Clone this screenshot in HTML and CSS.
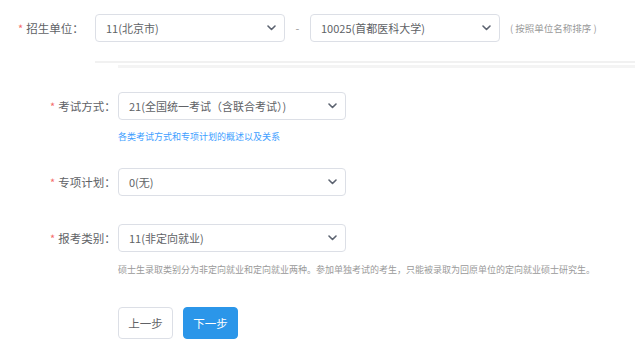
FILE: index.html
```html
<!DOCTYPE html>
<html lang="zh-CN">
<head>
    <meta charset="UTF-8">
    <meta name="viewport" content="width=device-width, initial-scale=1.0">
    <title>报考信息</title>
    <link rel="stylesheet" href="styles.css">
</head>
<body>

    <!-- 招生单位 -->
    <div class="unit-row">
        <label class="unit-label"><span class="req">*</span>招生单位：</label>
        <div class="select unit-select">
            <span>11(北京市)</span>
            <svg class="arrow" width="9" height="6" viewBox="0 0 9 6"><polyline points="1,1 4.5,4.5 8,1" /></svg>
        </div>
        <span class="dash">-</span>
        <div class="select unit-select">
            <span>10025(首都医科大学)</span>
            <svg class="arrow" width="9" height="6" viewBox="0 0 9 6"><polyline points="1,1 4.5,4.5 8,1" /></svg>
        </div>
        <span class="unit-hint">( 按照单位名称排序 )</span>
    </div>

    <div class="divider">
        <div class="line line-a"></div>
        <div class="line line-b"></div>
    </div>

    <!-- 报考信息 -->
    <div class="form">
        <div class="form-item item-exam">
            <label class="form-label"><span class="req">*</span>考试方式：</label>
            <div class="form-field">
                <div class="select">
                    <span>21(全国统一考试（含联合考试）)</span>
                    <svg class="arrow" width="9" height="6" viewBox="0 0 9 6"><polyline points="1,1 4.5,4.5 8,1" /></svg>
                </div>
                <a class="help-link" href="#">各类考试方式和专项计划的概述以及关系</a>
            </div>
        </div>

        <div class="form-item item-plan">
            <label class="form-label"><span class="req">*</span>专项计划：</label>
            <div class="form-field">
                <div class="select">
                    <span>0(无)</span>
                    <svg class="arrow" width="9" height="6" viewBox="0 0 9 6"><polyline points="1,1 4.5,4.5 8,1" /></svg>
                </div>
            </div>
        </div>

        <div class="form-item item-type">
            <label class="form-label"><span class="req">*</span>报考类别：</label>
            <div class="form-field">
                <div class="select">
                    <span>11(非定向就业)</span>
                    <svg class="arrow" width="9" height="6" viewBox="0 0 9 6"><polyline points="1,1 4.5,4.5 8,1" /></svg>
                </div>
                <p class="note">硕士生录取类别分为非定向就业和定向就业两种。参加单独考试的考生，只能被录取为回原单位的定向就业硕士研究生。</p>
            </div>
        </div>

        <div class="actions">
            <button class="btn btn-prev">上一步</button>
            <button class="btn btn-next">下一步</button>
        </div>
    </div>

</body>
</html>
```

FILE: styles.css
```css
* {
    margin: 0;
    padding: 0;
    box-sizing: border-box;
    font-family: "Noto Sans CJK SC", "Liberation Sans", sans-serif;
}

:root {
    --text-regular: #606266;
    --text-muted: #9a9a9a;
    --border-color: #dcdfe6;
    --danger: #f56c6c;
    --primary: #2b96e9;
    --link: #409eff;
}

body {
    background-color: #ffffff;
    color: var(--text-regular);
    width: 635px;
    height: 353px;
    overflow: hidden;
}

.req {
    color: var(--danger);
    margin-right: 3px;
    font-size: 11px;
}

/* Select box */
.select {
    height: 28px;
    border: 1px solid var(--border-color);
    border-radius: 4px;
    display: flex;
    align-items: center;
    justify-content: space-between;
    padding: 0 8px 0 10px;
    font-size: 11px;
    color: var(--text-regular);
    background-color: #fff;
}

.arrow polyline {
    fill: none;
    stroke: #5c6370;
    stroke-width: 1.6;
    stroke-linecap: round;
    stroke-linejoin: round;
}

/* Unit row */
.unit-row {
    display: flex;
    align-items: center;
    padding-top: 14px;
    padding-left: 18px;
}

.unit-label {
    width: 77px;
    font-size: 11.5px;
    line-height: 28px;
}

.unit-select {
    width: 190px;
}

.dash {
    width: 25px;
    text-align: center;
    font-size: 11px;
    color: var(--text-muted);
}

.unit-hint {
    margin-left: 10px;
    font-size: 9.5px;
    color: var(--text-muted);
}

/* Divider lines */
.divider {
    margin-top: 19px;
}

.line {
    height: 2px;
    background-color: #f1f1f1;
}

.line-a {
    margin-left: 95px;
}

.line-b {
    margin-left: 118px;
    margin-top: 2px;
    height: 3px;
    background-color: #f4f4f4;
}

/* Form */
.form {
    margin-top: 24px;
}

.form-item {
    display: flex;
    align-items: flex-start;
}

.form-label {
    width: 118px;
    padding-left: 50px;
    line-height: 28px;
    font-size: 11.5px;
}

.form-field {
    width: 228px;
}

.item-exam {
    margin-bottom: 24px;
}

.item-plan {
    margin-bottom: 28px;
}

.help-link {
    display: block;
    margin-top: 10px;
    font-size: 9px;
    line-height: 14px;
    color: var(--link);
    text-decoration: none;
    white-space: nowrap;
}

.note {
    margin-top: 11px;
    font-size: 9px;
    line-height: 14px;
    color: var(--text-muted);
    white-space: nowrap;
}

.actions {
    display: flex;
    gap: 10px;
    margin-top: 30px;
    padding-left: 118px;
}

.btn {
    width: 55px;
    height: 32px;
    border-radius: 4px;
    font-size: 11.5px;
    cursor: pointer;
}

.btn-prev {
    background-color: #fff;
    border: 1px solid var(--border-color);
    color: var(--text-regular);
}

.btn-next {
    background-color: var(--primary);
    border: 1px solid var(--primary);
    color: #fff;
}
```
